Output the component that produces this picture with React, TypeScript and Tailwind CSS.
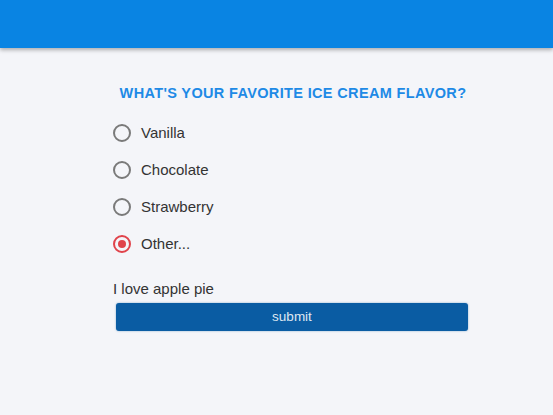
import { useState } from "react";

const flavors = ["Vanilla", "Chocolate", "Strawberry", "Other..."];

const Radio = ({ checked }: { checked: boolean }) => (
  <span
    className={`flex items-center justify-center w-[18px] h-[18px] rounded-full border-2 ${
      checked ? "border-[#e0434b]" : "border-[#7a7a7a]"
    }`}
  >
    {checked && <span className="w-[8px] h-[8px] rounded-full bg-[#e0434b]" />}
  </span>
);

const App = () => {
  const [flavor, setFlavor] = useState("Other...");

  return (
    <div className="min-h-[415px] w-full bg-[#f4f5f9] font-['Liberation_Sans',Arial,sans-serif] text-[#333]">
      {/* top bar */}
      <header className="h-[48px] bg-[#0984e3] shadow-[0_2px_4px_rgba(0,0,0,0.3)]" />

      <div className="ml-[113px] w-[360px] pt-[37px]">
        <h1 className="text-center text-[14.5px] leading-[17px] font-bold tracking-[0.35px] text-[#1e8ae6]">
          WHAT'S YOUR FAVORITE ICE CREAM FLAVOR?
        </h1>

        <div className="mt-[22px] flex flex-col gap-[19px]">
          {flavors.map((f) => (
            <label
              key={f}
              className="flex items-center gap-[10px] h-[18px] cursor-pointer"
              onClick={() => setFlavor(f)}
            >
              <Radio checked={flavor === f} />
              <span className="text-[15px] text-[#333]">{f}</span>
            </label>
          ))}
        </div>

        <p className="mt-[28px] text-[15px] text-[#333] leading-[16px]">I love apple pie</p>

        <button className="mt-[6px] ml-[3px] w-[352px] h-[28px] rounded-[3px] bg-[#0a5ca3] text-[13.5px] text-[#dfe8f2] shadow-[0_0_2px_rgba(10,92,163,0.5)]">
          submit
        </button>
      </div>
    </div>
  );
};

export default App;
